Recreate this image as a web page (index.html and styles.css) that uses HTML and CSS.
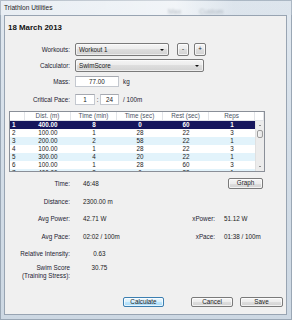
FILE: index.html
```html
<!DOCTYPE html>
<html lang="en">
<head>
    <meta charset="UTF-8">
    <title>Triathlon Utilities</title>
    <link rel="stylesheet" href="styles.css">
</head>
<body>
    <div class="window">
        <div class="titlebar">
            <span class="title">Triathlon Utilities</span>
            <span class="ghost" aria-hidden="true"><span>Max</span><span>Custom</span></span>
        </div>

        <div class="client">
            <h1 class="date">18 March 2013</h1>

            <div class="form">
                <div class="frow r-workouts">
                    <label>Workouts:</label>
                    <div class="combo c-workout"><span>Workout 1</span><i class="drop"></i></div>
                    <button class="wbtn sq minus">-</button>
                    <button class="wbtn sq plus">+</button>
                </div>
                <div class="frow r-calc">
                    <label>Calculator:</label>
                    <div class="combo c-calc"><span>SwimScore</span><i class="drop"></i></div>
                </div>
                <div class="frow r-mass">
                    <label>Mass:</label>
                    <div class="inp i-mass">77.00</div>
                    <span class="unit">kg</span>
                </div>
                <div class="frow r-pace">
                    <label>Critical Pace:</label>
                    <div class="inp i-min">1</div>
                    <span class="colon">:</span>
                    <div class="inp i-sec">24</div>
                    <span class="unit">/ 100m</span>
                </div>
            </div>

            <div class="tbl">
                <div class="thead">
                    <span></span>
                    <span>Dist. (m)</span>
                    <span>Time (min)</span>
                    <span>Time (sec)</span>
                    <span>Rest (sec)</span>
                    <span>Reps</span>
                    <span></span>
                </div>
                <div class="tbody">
                    <div class="rows" id="rows"></div>
                    <div class="vscroll">
                        <span class="arr"><i class="tri up"></i></span>
                        <span class="thumb"></span>
                        <span class="track"></span>
                        <span class="arr"><i class="tri down"></i></span>
                    </div>
                </div>
            </div>

            <div class="results">
                <div class="rrow">
                    <span class="lbl">Time:</span>
                    <span class="val">46:48</span>
                    <button class="wbtn graph">Graph</button>
                </div>
                <div class="rrow r-dist">
                    <span class="lbl">Distance:</span>
                    <span class="val">2300.00 m</span>
                </div>
                <div class="rrow r-power">
                    <span class="lbl">Avg Power:</span>
                    <span class="val">42.71 W</span>
                    <span class="lbl2">xPower:</span>
                    <span class="val2">51.12 W</span>
                </div>
                <div class="rrow r-pace2">
                    <span class="lbl">Avg Pace:</span>
                    <span class="val">02:02 / 100m</span>
                    <span class="lbl2">xPace:</span>
                    <span class="val2">01:38 / 100m</span>
                </div>
                <div class="rrow r-ri">
                    <span class="lbl">Relative Intensity:</span>
                    <span class="val mid">0.63</span>
                </div>
                <div class="rrow r-score">
                    <span class="lbl">Swim Score<br>(Training Stress):</span>
                    <span class="val mid">30.75</span>
                </div>
            </div>

            <div class="actions">
                <button class="wbtn default calc">Calculate</button>
                <button class="wbtn cancel">Cancel</button>
                <button class="wbtn save">Save</button>
            </div>
        </div>
    </div>

    <script>
        const intervals = [
            { dist: "400.00", min: 8, sec: 0, rest: 60, reps: 1 },
            { dist: "100.00", min: 1, sec: 28, rest: 22, reps: 3 },
            { dist: "200.00", min: 2, sec: 58, rest: 22, reps: 1 },
            { dist: "100.00", min: 1, sec: 28, rest: 22, reps: 3 },
            { dist: "300.00", min: 4, sec: 20, rest: 22, reps: 1 },
            { dist: "100.00", min: 1, sec: 28, rest: 60, reps: 3 },
            { dist: "400.00", min: 2, sec: 0, rest: 22, reps: 1 }
        ];

        const rowsContainer = document.getElementById('rows');

        intervals.forEach((item, index) => {
            let cls = 'tr';
            if (index === 0) cls += ' sel';
            else if (index % 2 === 0) cls += ' alt';
            rowsContainer.innerHTML += `
                <div class="${cls}">
                    <span>${index + 1}</span>
                    <span>${item.dist}</span>
                    <span>${item.min}</span>
                    <span>${item.sec}</span>
                    <span>${item.rest}</span>
                    <span>${item.reps}</span>
                </div>
            `;
        });
    </script>
</body>
</html>
```

FILE: styles.css
```css
* {
    margin: 0;
    padding: 0;
    box-sizing: border-box;
}
body {
    font-family: 'Liberation Sans', Arial, sans-serif;
    font-size: 6.3px;
    color: #1c2230;
    background: #cfd9e4;
}
.window {
    width: 292px;
    height: 320px;
    background: linear-gradient(to bottom, #e2e9f0, #d5dfe9 40%, #cdd8e3);
    box-shadow: inset 0 0 0 1px #9aa7b5;
}
.titlebar {
    height: 15px;
    padding-left: 4px;
    line-height: 15px;
    position: relative;
    background: linear-gradient(to right, rgba(255,255,255,0.25), rgba(255,255,255,0.55) 60%, rgba(210,220,230,0.3) 80%);
}
.title {
    font-size: 6.6px;
    color: #1e1e1e;
}
.ghost {
    position: absolute;
    top: 4px;
    left: 168px;
    font-size: 7px;
    color: #6e7a86;
    filter: blur(1.2px);
    opacity: 0.5;
}
.ghost span {
    margin-right: 18px;
}
.client {
    margin: 0 5px 0 4px;
    height: 300px;
    border: 1px solid #98a4b2;
    background: #f0f0f0;
}
.date {
    margin: 7px 0 0 3px;
    font-size: 7.9px;
    line-height: 10px;
    font-weight: bold;
    color: #111;
}

/* form rows */
.form {
    margin-top: 10px;
}
.frow {
    display: flex;
    align-items: center;
}
.frow label {
    width: 65px;
    margin-right: 5px;
    text-align: right;
}
.r-workouts, .r-calc {
    height: 13px;
}
.r-calc {
    margin-top: 3px;
}
.r-mass {
    margin-top: 4px;
    height: 11px;
}
.r-pace {
    margin-top: 7px;
    height: 11px;
}
.combo {
    height: 13px;
    border: 1px solid #7a7a7a;
    border-radius: 2px;
    background: linear-gradient(to bottom, #f4f4f4, #ececec 50%, #dedede 50%, #d2d2d2);
    box-shadow: inset 0 0 0 1px rgba(255,255,255,0.6);
    padding: 0 4px 0 3px;
    display: flex;
    align-items: center;
    justify-content: space-between;
    color: #1a1a1a;
}
.c-workout {
    width: 94px;
}
.c-calc {
    width: 129px;
}
.drop {
    width: 0;
    height: 0;
    border-left: 2px solid transparent;
    border-right: 2px solid transparent;
    border-top: 2px solid #111;
}
.wbtn {
    font-family: inherit;
    font-size: 6.3px;
    color: #1c1c1c;
    border: 1px solid #7a7a7a;
    border-radius: 2px;
    background: linear-gradient(to bottom, #f4f4f4, #ececec 50%, #dedede 50%, #d2d2d2);
    box-shadow: inset 0 0 0 1px rgba(255,255,255,0.7);
    text-align: center;
    line-height: 1;
}
.wbtn.sq {
    height: 13px;
    width: 12px;
}
.minus {
    margin-left: 8px;
}
.plus {
    margin-left: 5px;
    width: 13px;
}
.inp {
    height: 11px;
    background: #fff;
    border: 1px solid #c4c8cf;
    border-top-color: #a6a9b0;
    text-align: center;
    line-height: 9px;
    color: #1a1a1a;
}
.i-mass {
    width: 44px;
}
.i-min {
    width: 20px;
}
.i-sec {
    width: 19px;
}
.colon {
    width: 5px;
    text-align: center;
}
.unit {
    margin-left: 4px;
}

/* intervals table */
.tbl {
    margin: 6px 0 0 4px;
    width: 256px;
    height: 61px;
    border: 1px solid #8a8f98;
    background: #fff;
}
.thead {
    display: grid;
    grid-template-columns: 15px repeat(5, 46px) 9px;
    height: 9px;
    line-height: 8px;
    border-bottom: 1px solid #e2e4e8;
    color: #4a5363;
}
.thead span {
    text-align: center;
    border-right: 1px solid #e2e4e8;
}
.tbody {
    display: flex;
    height: 50px;
    overflow: hidden;
}
.rows {
    width: 245px;
}
.tr {
    display: grid;
    grid-template-columns: 15px repeat(5, 46px);
    height: 8px;
    line-height: 8px;
    text-align: center;
    color: #1a1a1a;
}
.tr span:first-child {
    text-align: left;
    padding-left: 2px;
}
.tr.alt {
    background: #e2f3fb;
}
.tr.sel {
    background: #16165c;
    color: #fff;
    font-weight: bold;
}
.vscroll {
    width: 9px;
    background: #ececec;
    border-left: 1px solid #e0e0e0;
    display: flex;
    flex-direction: column;
}
.arr {
    height: 9px;
    display: flex;
    align-items: center;
    justify-content: center;
}
.tri {
    width: 0;
    height: 0;
    border-left: 1.5px solid transparent;
    border-right: 1.5px solid transparent;
}
.tri.up {
    border-bottom: 1.5px solid #333;
}
.tri.down {
    border-top: 1.5px solid #333;
}
.thumb {
    height: 8px;
    margin: 0 1px;
    border: 1px solid #9c9c9c;
    border-radius: 2px;
    background: linear-gradient(to right, #f6f6f6, #e4e4e4);
}
.track {
    flex: 1;
}

/* results */
.results {
    margin-top: 5px;
}
.rrow {
    display: flex;
    align-items: center;
    height: 12px;
}
.lbl {
    width: 65px;
    text-align: right;
}
.val {
    margin-left: 13px;
    width: 105px;
    color: #1a1a1a;
}
.val.mid {
    width: 33px;
    text-align: center;
}
.lbl2 {
    width: 27px;
    text-align: right;
}
.val2 {
    margin-left: 9px;
    color: #1a1a1a;
}
.graph {
    margin-left: 40px;
    width: 35px;
    height: 11px;
}
.r-dist {
    margin-top: 6px;
}
.r-power {
    margin-top: 5px;
}
.r-pace2 {
    margin-top: 6px;
}
.r-ri {
    margin-top: 5px;
}
.r-score {
    margin-top: 5px;
    height: 16px;
    align-items: flex-start;
    line-height: 8px;
}

/* dialog buttons */
.actions {
    margin-top: 17px;
    display: flex;
    height: 10px;
}
.actions .wbtn {
    height: 10px;
}
.calc {
    margin-left: 118px;
    width: 41px;
}
.cancel {
    margin-left: 27px;
    width: 42px;
}
.save {
    margin-left: 7px;
    width: 43px;
}
.wbtn.default {
    border-color: #3c7fb1;
    background: linear-gradient(to bottom, #eaf6fd, #d9f0fc 50%, #bee6fd 50%, #a7d9f5);
}
```
